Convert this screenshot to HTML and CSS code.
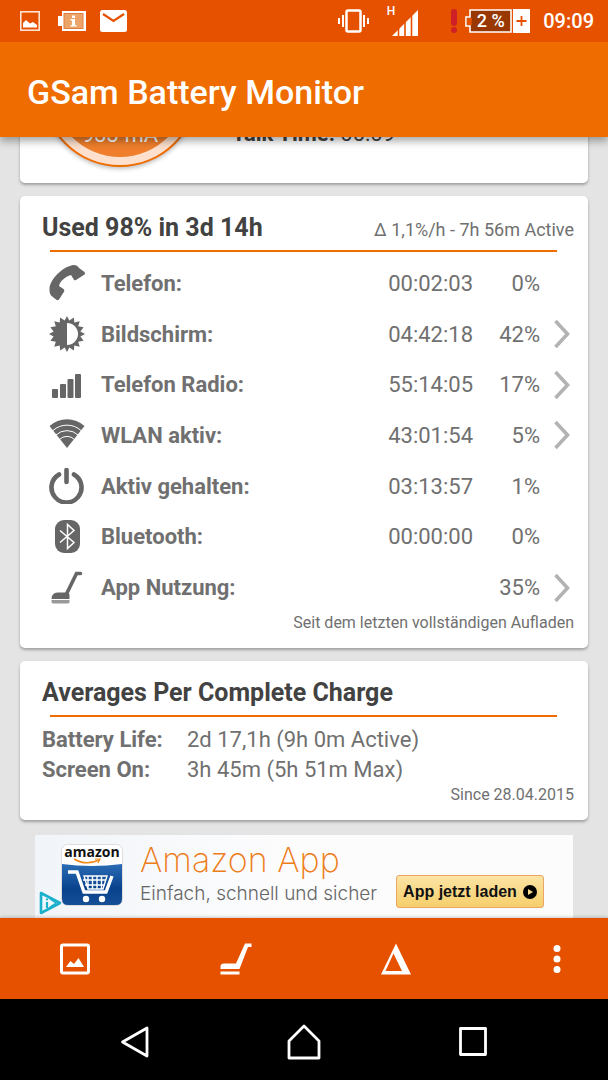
FILE: index.html
```html
<!DOCTYPE html>
<html lang="de">
<head>
<meta charset="utf-8">
<meta name="viewport" content="width=device-width, initial-scale=1">
<title>GSam Battery Monitor</title>
<link rel="stylesheet" href="styles.css">
</head>
<body>
<div class="status-bar">
  <div class="status-left">
    <svg width="20" height="20" viewBox="0 0 20 20"><rect x="0.8" y="0.8" width="18.4" height="18.4" fill="none" stroke="#ffe2cf" stroke-width="1.6"/><path d="M3 16.500v-4.500l3-3 4 3.500 3-1.500 4 3v2.500z" fill="#fff"/></svg>
    <svg width="28" height="20" viewBox="0 0 28 20"><path d="M0 5h4V0h24v20H4v-5H0z" fill="#fff"/><rect x="6" y="2.500" width="19" height="15" fill="#eda468" stroke="#e08040"/><path d="M14 4.500h3v2.500h-3zM12.500 8h4.500v6h1.500v1.500h-6V14H14V9.500h-1.500z" fill="#fff"/></svg>
    <svg width="27" height="22" viewBox="0 0 27 22"><rect width="27" height="22" rx="2.500" fill="#fff"/><path d="M3 4l10.500 7L24 4" fill="none" stroke="#e65100" stroke-width="2.200"/></svg>
  </div>
  <div class="status-right">
    <svg width="31" height="24" viewBox="0 0 31 24"><rect x="8.500" y="1.500" width="14" height="21" rx="1.500" fill="none" stroke="#fff" stroke-width="2.500"/><path d="M1 9v6M5 6v12M26 6v12M30 9v6" stroke="#fff" stroke-width="2"/></svg>
    <div class="signal">
      <span>H</span>
      <svg width="26" height="26" viewBox="0 0 26 26"><path d="M0 26L26 0v26z" fill="#fff"/><path d="M6.500 0v26M13 0v26M19.500 0v26" stroke="#e65100" stroke-width="1.600"/></svg>
    </div>
    <svg class="alert" width="6" height="24" viewBox="0 0 6 24"><rect width="6" height="17" rx="3" fill="#cf2027"/><circle cx="3" cy="21" r="3" fill="#cf2027"/></svg>
    <div class="battery">
      <svg class="battery-shape" width="65" height="24" viewBox="0 0 65 24"><path d="M1 8h4V1h41v22H5v-6H1z" fill="#983800" stroke="#fff" stroke-width="1.600"/><path d="M1.800 9h5v7h-5z" fill="#e65100"/><rect x="48" width="17" height="24" fill="#fff"/><path d="M51.500 12h10M56.500 7v10" stroke="#e65100" stroke-width="1.800"/></svg>
      <span class="battery-text">2 %</span>
    </div>
    <time class="clock">09:09</time>
  </div>
</div>

<header class="app-bar"><h1>GSam Battery Monitor</h1></header>

<main class="viewport">
  <div class="scrolled">
    <section class="card summary">
      <div class="gauge"><div class="gauge-fill"><span>933 mA</span></div></div>
      <p class="talk"><b>Talk Time:</b> 00:09</p>
    </section>

    <section class="card">
      <div class="card-head">
        <h2>Used 98% in 3d 14h</h2>
        <span class="rate">Δ 1,1%/h - 7h 56m Active</span>
      </div>
      <table class="usage">
        <colgroup><col class="icon-col"><col><col class="time-col"><col class="pct-col"><col class="more-col"></colgroup>
        <tbody>
        <tr>
          <td class="icon"><svg width="36" height="36" viewBox="0 0 36 36"><path d="M.5 25C0 15 14 1 25 0c2 0 4 1 5 3l5.500 4c.6 1 .6 2 0 2.500L27 15c-1 .6-2 0-2.500-1L22 10c-6 2-11 6-12 11l4.500 3c1 1 1 2 .3 3L10 34.500c-1 1-2 1-3 0L2 30.500c-1-2-1.500-3-1.500-5.500z" fill="#666"/></svg></td>
          <th scope="row">Telefon:</th><td class="time">00:02:03</td><td class="pct">0%</td><td class="more"></td>
        </tr>
        <tr>
          <td class="icon"><svg width="36" height="36" viewBox="0 0 36 36"><path d="M18 0l2.300 4.500L24.900 1.400l.4 5.100 5.400-1.200-1.500 4.900 5.400 1-3.200 4.200L36 18l-4.600 2.600 3.200 4.200-5.400 1 1.500 4.900-5.400-1.200-.4 5.100-4.600-3.100L18 36l-2.300-4.500-4.600 3.100-.4-5.100-5.400 1.200 1.500-4.900-5.400-1 3.200-4.200L0 18l4.600-2.600-3.200-4.200 5.400-1-1.500-4.900 5.400 1.200.4-5.100 4.600 3.100z" fill="#666"/><path d="M18 7a11 11 0 0 1 0 22z" fill="#fff"/></svg></td>
          <th scope="row">Bildschirm:</th><td class="time">04:42:18</td><td class="pct">42%</td>
          <td class="more"><button aria-label="Bildschirm"><svg width="16" height="30" viewBox="0 0 16 30"><path d="M1.500 2l12 13-12 13" fill="none" stroke="#b3b3b3" stroke-width="3.600"/></svg></button></td>
        </tr>
        <tr>
          <td class="icon"><svg width="36" height="36" viewBox="0 0 36 36"><g fill="#666"><rect x="3" y="22" width="6" height="9" rx="1"/><rect x="11" y="17" width="6" height="14" rx="1"/><rect x="18.500" y="12" width="6" height="19" rx="1"/><rect x="26" y="7" width="6" height="24" rx="1"/></g></svg></td>
          <th scope="row">Telefon Radio:</th><td class="time">55:14:05</td><td class="pct">17%</td>
          <td class="more"><button aria-label="Telefon Radio"><svg width="16" height="30" viewBox="0 0 16 30"><path d="M1.500 2l12 13-12 13" fill="none" stroke="#b3b3b3" stroke-width="3.600"/></svg></button></td>
        </tr>
        <tr>
          <td class="icon"><svg width="36" height="36" viewBox="0 0 36 36"><path d="M.5 9a26 26 0 0 1 35 0L18 31z" fill="#666"/><path d="M4 13.500a21 21 0 0 1 28 0M7 18a16 16 0 0 1 22 0M10.500 22.500a10.500 10.500 0 0 1 15 0" fill="none" stroke="#fff" stroke-width="1"/></svg></td>
          <th scope="row">WLAN aktiv:</th><td class="time">43:01:54</td><td class="pct">5%</td>
          <td class="more"><button aria-label="WLAN aktiv"><svg width="16" height="30" viewBox="0 0 16 30"><path d="M1.500 2l12 13-12 13" fill="none" stroke="#b3b3b3" stroke-width="3.600"/></svg></button></td>
        </tr>
        <tr>
          <td class="icon"><svg width="36" height="36" viewBox="0 1 36 36"><path d="M10 7.500A15 15 0 1 0 25 7.500M17.500 3v12" fill="none" stroke="#666" stroke-width="4.600" stroke-linecap="round"/></svg></td>
          <th scope="row">Aktiv gehalten:</th><td class="time">03:13:57</td><td class="pct">1%</td><td class="more"></td>
        </tr>
        <tr>
          <td class="icon"><svg width="36" height="36" viewBox="0 0 36 36"><rect x="6" y="1" width="25" height="33" rx="9" fill="#666"/><path d="M11 11.500l14 12-6.500 6V5.500l6.500 6-14 12" fill="none" stroke="#fff" stroke-width="1.500"/></svg></td>
          <th scope="row">Bluetooth:</th><td class="time">00:00:00</td><td class="pct">0%</td><td class="more"></td>
        </tr>
        <tr>
          <td class="icon"><svg width="36" height="36" viewBox="0 0 36 36"><path d="M31.500 3.500h-4L17 25" fill="none" stroke="#666" stroke-width="3.600" stroke-linecap="round"/><path d="M2.500 29q0-6 6-6.500h9q3 0 3 3V29z" fill="#666"/><path d="M2.500 30h18v2.500q0 1-2 1H5q-2.500 0-2.500-1.500z" fill="#999"/></svg></td>
          <th scope="row">App Nutzung:</th><td class="time"></td><td class="pct">35%</td>
          <td class="more"><button aria-label="App Nutzung"><svg width="16" height="30" viewBox="0 0 16 30"><path d="M1.500 2l12 13-12 13" fill="none" stroke="#b3b3b3" stroke-width="3.600"/></svg></button></td>
        </tr>
        </tbody>
      </table>
      <p class="note">Seit dem letzten vollständigen Aufladen</p>
    </section>

    <section class="card">
      <div class="card-head"><h2>Averages Per Complete Charge</h2></div>
      <dl class="averages">
        <dt>Battery Life:</dt><dd>2d 17,1h (9h 0m Active)</dd>
        <dt>Screen On:</dt><dd>3h 45m (5h 51m Max)</dd>
      </dl>
      <p class="note">Since 28.04.2015</p>
    </section>

    <aside class="ad">
      <svg class="ad-choices" width="23" height="24" viewBox="0 0 23 24"><path d="M2 2l19 10L2 22z" fill="#eef8fb" stroke="#1bb0cc" stroke-width="2.600" stroke-linejoin="round"/><path d="M8 7.500v1.800M8 11v6" stroke="#1bb0cc" stroke-width="2.200"/><path d="M11 8l6 4-6 4" fill="none" stroke="#1bb0cc" stroke-width="1.400"/></svg>
      <div class="ad-logo">
        <svg width="62" height="62" viewBox="0 0 62 62">
          <defs><linearGradient id="blue" x1="0" y1="0" x2="0" y2="1"><stop offset="0" stop-color="#2b6cb4"/><stop offset=".3" stop-color="#1a57a2"/><stop offset=".6" stop-color="#09428c"/><stop offset="1" stop-color="#154f96"/></linearGradient></defs>
          <rect x=".5" y=".5" width="61" height="61" rx="6" fill="#fff" stroke="#ddd"/>
          <path d="M1 20q30 4 60 0v35q0 6-6 6H7q-6 0-6-6z" fill="url(#blue)"/>
          <path d="M13 15q12 7 25 1" fill="none" stroke="#f28a1a" stroke-width="1.600"/><path d="M34 15h5l-2 4" fill="none" stroke="#f28a1a" stroke-width="1.200"/>
          <path d="M7 28h9l7 20h22l6-16" fill="none" stroke="#fff" stroke-width="3.400"/>
          <path d="M23 32h23l-4 13H27zM22 36h23M24 41h20M27 32v13M31.500 32v13M36 32v13M40.500 32v13" fill="none" stroke="#fff" stroke-width="1.400"/>
          <circle cx="25" cy="55" r="3.200" fill="#fff"/><circle cx="41" cy="55" r="3.200" fill="#fff"/>
        </svg>
        <span>amazon</span>
      </div>
      <div class="ad-copy"><strong>Amazon App</strong><span>Einfach, schnell und sicher</span></div>
      <button class="ad-button">App jetzt laden <svg width="14" height="14" viewBox="0 0 14 14"><circle cx="7" cy="7" r="7"/><path d="M5 4l5 3-5 3z" fill="#f8dc8c"/></svg></button>
    </aside>
  </div>
</main>

<div class="toolbar">
  <button aria-label="Diagramm"><svg width="32" height="32" viewBox="0 0 32 32"><rect x="2.500" y="2" width="27" height="28" rx="1.500" fill="none" stroke="#fff" stroke-width="3"/><path d="M7 24l4.500-6 3.500 3 4.500-6L25 24z" fill="#fff"/></svg></button>
  <button aria-label="App Nutzung"><svg width="32" height="32" viewBox="0 0 32 32"><path d="M25 .5h6.500V4h-3.500L19.500 26H.5v-2.500q0-3 3.500-3h12z" fill="#fff"/><rect x=".5" y="28.500" width="19" height="3" fill="#fff"/></svg></button>
  <button aria-label="Delta"><svg width="32" height="32" viewBox="0 0 32 32"><path fill-rule="evenodd" d="M16 .5L31 31.500H1zM13.500 10.500L5.500 28H22z" fill="#fff"/></svg></button>
  <button aria-label="Mehr"><svg width="8" height="32" viewBox="0 0 8 32"><g fill="#fff"><circle cx="4" cy="5.500" r="3.500"/><circle cx="4" cy="16" r="3.500"/><circle cx="4" cy="26.500" r="3.500"/></g></svg></button>
</div>
<nav class="system-nav">
  <button aria-label="Zurück"><svg width="30" height="34" viewBox="0 0 30 34"><path d="M27 3v28L2.500 17z" fill="none" stroke="#fff" stroke-width="2.800" stroke-linejoin="round"/></svg></button>
  <button aria-label="Startseite"><svg width="34" height="36" viewBox="0 0 34 36"><path d="M2 34V17L17 2l15 15v17z" fill="none" stroke="#fff" stroke-width="2.800" stroke-linejoin="round"/></svg></button>
  <button aria-label="Übersicht"><svg width="30" height="34" viewBox="0 0 30 34"><rect x="2.500" y="3.500" width="25" height="26" fill="none" stroke="#fff" stroke-width="2.800" stroke-linejoin="round"/></svg></button>
</nav>
</body>
</html>
```

FILE: styles.css
```css
* { box-sizing: border-box; }

body {
  margin: 0;
  height: 100vh;
  display: flex;
  flex-direction: column;
  background: #e4e4e4;
  color: #707070;
  font-family: Roboto, sans-serif;
  font-size: 22px;
}

h1, h2, p, dl, dd { margin: 0; }
svg { display: block; flex: none; }

button {
  border: 0;
  padding: 0;
  background: none;
  font: inherit;
}

.status-bar {
  position: relative;
  z-index: 2;
  flex: none;
  height: 42px;
  padding: 0 14px 0 20px;
  display: flex;
  align-items: center;
  justify-content: space-between;
  background: #e65100;
  color: #fff;
}

.status-left { display: flex; align-items: center; gap: 14px; }
.status-left svg:first-child { margin-right: 4px; }
.status-right { display: flex; align-items: center; }

.signal {
  display: flex;
  align-items: flex-start;
  margin-left: 18px;
  font-size: 12px;
  font-weight: 500;
  line-height: 10px;
}
.signal svg { margin-top: 4px; margin-left: -3px; }
.alert { margin-left: 33px; }

.battery { position: relative; margin: 0 13px 0 8px; }
.battery-text {
  position: absolute;
  top: 0;
  left: 5px;
  width: 41px;
  line-height: 24px;
  font-size: 18px;
  font-weight: 500;
  text-align: center;
}
.clock { font-size: 20px; font-weight: 500; }

.app-bar {
  position: relative;
  z-index: 1;
  flex: none;
  height: 95px;
  padding: 4px 27px 0;
  display: flex;
  align-items: center;
  background: #ef6c00;
  color: #fff;
  box-shadow: 0 4px 8px rgba(0, 0, 0, 0.35);
}
.app-bar h1 { font-size: 34px; font-weight: 500; }

.viewport { flex: 1; min-height: 0; overflow: hidden; }

/* Scroll position of the card list. */
.scrolled { margin-top: -142px; padding: 0 20px; }

.card {
  margin-bottom: 13px;
  padding: 15px 14px 15px 22px;
  background: #fff;
  border-radius: 5px;
  box-shadow: 0 2px 3px rgba(0, 0, 0, 0.3);
}

.summary {
  display: flex;
  align-items: flex-end;
  padding: 16px 22px;
}
.gauge {
  width: 156px;
  height: 156px;
  padding: 8px;
  border: 2px solid #ef6c00;
  border-radius: 50%;
  background: #fde0cd;
  box-shadow: 0 2px 4px rgba(0, 0, 0, 0.25);
}
.gauge-fill {
  height: 100%;
  padding-bottom: 8px;
  display: flex;
  align-items: flex-end;
  justify-content: center;
  border-radius: 50%;
  background: #ef7f2c;
  color: #fff;
  line-height: 28px;
}
.talk { margin-left: 34px; padding-bottom: 19px; line-height: 28px; color: #424242; }

.card-head {
  position: relative;
  display: flex;
  justify-content: space-between;
  align-items: baseline;
  line-height: 34px;
}
.card-head::after {
  content: "";
  position: absolute;
  top: 39px;
  left: 8px;
  right: 17px;
  height: 2px;
  background: #ef6c00;
}
.card-head h2 { font-size: 25px; font-weight: 700; color: #424242; }
.rate { font-size: 18px; line-height: 20px; }

.usage {
  width: 100%;
  height: 355px;
  margin-top: 13px;
  border-spacing: 0;
  table-layout: fixed;
}
.icon-col { width: 59px; }
.time-col { width: 100px; }
.pct-col { width: 67px; }
.more-col { width: 34px; }
.usage td, .usage th { padding: 0; vertical-align: middle; }
.usage .icon { padding-left: 7px; }
.usage th { text-align: left; font-weight: 700; }
.usage .time, .usage .pct { text-align: right; }
.usage .more { padding-left: 14px; }
.usage button { display: block; }

.note { font-size: 16px; line-height: 20px; text-align: right; }

.averages {
  display: grid;
  grid-template-columns: 145px 1fr;
  margin-top: 15px;
  line-height: 30px;
}
.averages dt { font-weight: 700; }

.ad {
  position: relative;
  display: flex;
  align-items: flex-start;
  margin: 15px 15px 0;
  padding: 9px 29px 12px 26px;
  background: linear-gradient(90deg, #f1f5f9, #fcfcfd 45%);
  font-family: "Liberation Sans", sans-serif;
}
.ad-choices { position: absolute; left: 4px; top: 56px; }
.ad-logo { position: relative; color: #111; }
.ad-logo span {
  position: absolute;
  top: 0;
  left: 0;
  right: 0;
  font: 700 14px/16px "Open Sans", sans-serif;
  text-align: center;
}
.ad-copy { display: flex; flex-direction: column; margin-left: 17px; white-space: nowrap; }
.ad-copy strong { font: 200 34px/32px Inter, sans-serif; color: #ee7d1b; }
.ad-copy span { font: 300 19px/36px Inter, sans-serif; color: #666; }
.ad-button {
  display: flex;
  align-items: center;
  justify-content: center;
  gap: 6px;
  width: 148px;
  height: 33px;
  margin: 31px 0 0 auto;
  border: 1px solid #eba565;
  border-radius: 3px;
  background: linear-gradient(#fbe4a4, #f6cf6c);
  color: #111;
  font-size: 16px;
  font-weight: 700;
  white-space: nowrap;
}

.toolbar {
  position: relative;
  flex: none;
  height: 81px;
  padding: 0 35px 0 59px;
  display: flex;
  align-items: center;
  justify-content: space-between;
  background: #e65100;
  box-shadow: 0 -1px 3px rgba(0, 0, 0, 0.2);
}
.toolbar button { width: 32px; }
.toolbar svg { margin: 0 auto; }

.system-nav {
  position: relative;
  flex: none;
  height: 81px;
  padding: 5px 120px 0;
  display: flex;
  align-items: center;
  justify-content: space-between;
  background: #000;
}
```
